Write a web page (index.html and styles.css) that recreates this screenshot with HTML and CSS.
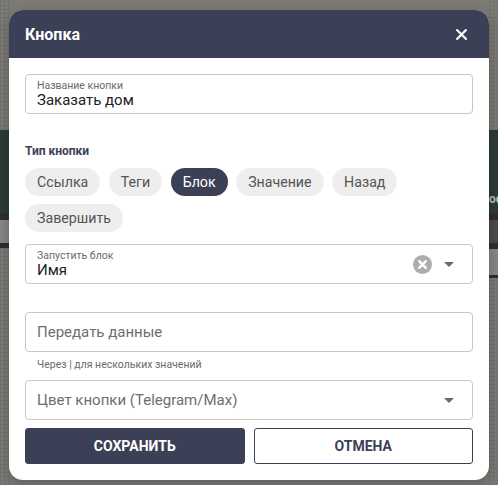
FILE: index.html
```html
<!DOCTYPE html>
<html lang="ru">
<head>
<meta charset="utf-8">
<title>Кнопка</title>
<link rel="stylesheet" href="styles.css">
</head>
<body>
<div class="backdrop">
  <div class="bg-col bg-left">
    <div class="band grid h130"></div>
    <div class="band green h83"></div>
    <div class="band dark h7"></div>
    <div class="band light h23"></div>
    <div class="band dark h5"></div>
    <div class="band grid fill"></div>
  </div>
  <div class="bg-gap"></div>
  <div class="bg-col bg-right">
    <div class="band grid h130"></div>
    <div class="band green h83"><span class="bg-text">ос</span></div>
    <div class="band dark h7"></div>
    <div class="band mid h23"></div>
    <div class="band dark h6"></div>
    <div class="band light h26"></div>
    <div class="band dark h3"></div>
    <div class="band grid fill"></div>
  </div>
</div>

<div class="modal">
  <div class="modal-header">
    <span class="modal-title">Кнопка</span>
    <svg class="close" width="11" height="11" viewBox="0 0 11 11"><path d="M1.2 1.2 L9.8 9.8 M9.8 1.2 L1.2 9.8" stroke="#fff" stroke-width="2.2" stroke-linecap="square"/></svg>
  </div>
  <div class="modal-body">
    <div class="field filled">
      <span class="field-label">Название кнопки</span>
      <span class="field-value">Заказать дом</span>
    </div>

    <div class="section-title">Тип кнопки</div>
    <div class="chips">
      <span class="chip">Ссылка</span>
      <span class="chip">Теги</span>
      <span class="chip active">Блок</span>
      <span class="chip">Значение</span>
      <span class="chip">Назад</span>
      <span class="chip">Завершить</span>
    </div>

    <div class="field filled select gap12">
      <div class="field-text">
        <span class="field-label">Запустить блок</span>
        <span class="field-value">Имя</span>
      </div>
      <svg class="clear" width="19" height="19" viewBox="0 0 19 19"><circle cx="9.5" cy="9.5" r="9.5" fill="#adadad"/><path d="M6.2 6.2 L12.8 12.8 M12.8 6.2 L6.2 12.8" stroke="#fff" stroke-width="2.4" stroke-linecap="round"/></svg>
      <svg class="arrow" width="10" height="5" viewBox="0 0 10 5"><path d="M0 0 L10 0 L5 5 Z" fill="#6b6b6b"/></svg>
    </div>

    <div class="field placeholder gap28">
      <span class="field-ph">Передать данные</span>
    </div>
    <div class="helper">Через | для нескольких значений</div>

    <div class="field placeholder select gap8">
      <span class="field-ph grow">Цвет кнопки (Telegram/Max)</span>
      <svg class="arrow" width="10" height="5" viewBox="0 0 10 5"><path d="M0 0 L10 0 L5 5 Z" fill="#6b6b6b"/></svg>
    </div>

    <div class="actions">
      <button class="btn btn-primary">Сохранить</button>
      <button class="btn btn-outline">Отмена</button>
    </div>
  </div>
</div>
</body>
</html>
```

FILE: styles.css
```css
* { box-sizing: border-box; }
html, body { margin: 0; padding: 0; }
body {
  width: 498px;
  height: 485px;
  overflow: hidden;
  font-family: Roboto, "Noto Sans", "Liberation Sans", sans-serif;
  background: #7c7b76;
  position: relative;
}

.backdrop {
  display: flex;
  width: 498px;
  height: 485px;
}
.bg-col { display: flex; flex-direction: column; width: 9px; }
.bg-gap { flex: 1; }
.band { flex: none; position: relative; overflow: hidden; }
.grid {
  background-color: #7c7b76;
  background-image:
    repeating-linear-gradient(0deg, rgba(0,0,0,0.06) 0 1px, transparent 1px 4px),
    repeating-linear-gradient(90deg, rgba(0,0,0,0.06) 0 1px, transparent 1px 4px);
}
.green { background: #2b3c35; }
.dark { background: #2f2f2f; }
.light { background: #878785; }
.mid { background: #4a4a4a; }
.h130 { height: 130px; }
.h83 { height: 83px; }
.h7 { height: 7px; }
.h23 { height: 23px; }
.h5 { height: 5px; }
.h6 { height: 6px; }
.h26 { height: 26px; }
.h3 { height: 3px; }
.fill { flex: 1; }
.bg-text {
  position: absolute;
  left: 0;
  top: 62px;
  font-size: 12px;
  font-weight: 700;
  color: #b9bcbb;
  white-space: nowrap;
}

.modal {
  position: absolute;
  left: 9px;
  top: 10px;
  width: 480px;
  height: 470px;
  background: #fff;
  border-radius: 14px;
  overflow: hidden;
  box-shadow: 0 4px 14px rgba(0,0,0,0.25);
}
.modal-header {
  height: 48px;
  background: #3c4057;
  display: flex;
  align-items: center;
  justify-content: space-between;
  padding: 0 22px 0 16px;
}
.modal-title {
  color: #fff;
  font-size: 16px;
  font-weight: 700;
}
.close { display: block; }

.modal-body {
  padding: 16px 16px 16px;
  display: flex;
  flex-direction: column;
}

.field {
  height: 40px;
  border: 1px solid #c6c6c6;
  border-radius: 4px;
  padding: 0 12px 0 11px;
  display: flex;
  align-items: center;
}
.field.filled {
  flex-direction: column;
  align-items: flex-start;
  justify-content: center;
}
.field.filled.select {
  flex-direction: row;
  align-items: center;
  padding-right: 18px;
}
.field-text { display: flex; flex-direction: column; flex: 1; }
.field-label {
  font-size: 10.5px;
  color: #6a6a6a;
  line-height: 12px;
}
.field-value {
  font-size: 15px;
  color: #222;
  line-height: 17px;
}
.field-ph {
  font-size: 15px;
  color: #6e6e6e;
}
.field.placeholder.select { padding-right: 18px; }
.grow { flex: 1; }
.clear { display: block; margin-right: 12px; }
.arrow { display: block; }

.gap12 { margin-top: 12px; }
.gap28 { margin-top: 28px; }
.gap8 { margin-top: 8px; }

.section-title {
  margin-top: 29px;
  font-size: 12px;
  font-weight: 700;
  color: #3c4057;
  line-height: 16px;
}
.chips {
  margin-top: 9px;
  display: flex;
  flex-wrap: wrap;
  gap: 8px 8.5px;
}
.chip {
  height: 28px;
  padding: 0 12px;
  border-radius: 14px;
  background: #eeeeee;
  color: #555;
  font-size: 14.2px;
  display: flex;
  align-items: center;
}
.chip.active {
  background: #3c4057;
  color: #fff;
}

.helper {
  margin-top: 6px;
  padding-left: 12px;
  font-size: 10.5px;
  line-height: 14px;
  color: #6a6a6a;
}

.actions {
  margin-top: 8px;
  display: flex;
  gap: 9px;
}
.btn {
  flex: 1;
  height: 36px;
  border-radius: 3px;
  font-family: Roboto, "Noto Sans", "Liberation Sans", sans-serif;
  font-size: 14px;
  font-weight: 700;
  text-transform: uppercase;
  cursor: pointer;
}
.btn-primary {
  background: #3c4057;
  color: #fff;
  border: 1px solid #3c4057;
}
.btn-outline {
  background: #fff;
  color: #3c4057;
  border: 1px solid #3c4057;
}
```
